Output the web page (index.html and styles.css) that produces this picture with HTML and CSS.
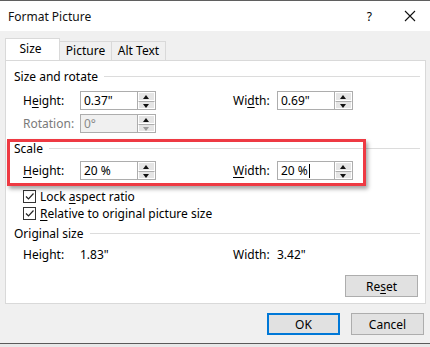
FILE: index.html
```html
<!DOCTYPE html>
<html lang="en">
<head>
    <meta charset="UTF-8">
    <title>Format Picture</title>
    <link rel="stylesheet" href="styles.css">
</head>
<body>
    <div class="dialog">
        <div class="titlebar">
            <span class="title">Format Picture</span>
            <span class="help">?</span>
            <svg class="close" width="12" height="12" viewBox="0 0 12 12">
                <path d="M1 1 L11 11 M11 1 L1 11" stroke="#111" stroke-width="1.1"/>
            </svg>
        </div>

        <div class="content">
            <div class="tabs">
                <div class="tab active">Size</div>
                <div class="tab">Picture</div>
                <div class="tab">Alt Text</div>
            </div>

            <div class="panel">
                <div class="section-title"><span>Size and rotate</span></div>
                <div class="field-grid">
                    <label>H<u>e</u>ight:</label>
                    <div class="spin"><div class="spin-value">0.37"</div><div class="spin-btns"><span class="up"></span><span class="down"></span></div></div>
                    <label class="wlabel">Wi<u>d</u>th:</label>
                    <div class="spin"><div class="spin-value">0.69"</div><div class="spin-btns"><span class="up"></span><span class="down"></span></div></div>

                    <label class="disabled">Rotation:</label>
                    <div class="spin disabled"><div class="spin-value">0°</div><div class="spin-btns"><span class="up"></span><span class="down"></span></div></div>
                </div>

                <div class="section-title scale-title"><span>Scale</span></div>
                <div class="field-grid scale-grid">
                    <label><u>H</u>eight:</label>
                    <div class="spin"><div class="spin-value">20 %</div><div class="spin-btns"><span class="up"></span><span class="down"></span></div></div>
                    <label class="wlabel"><u>W</u>idth:</label>
                    <div class="spin"><div class="spin-value">20 %<span class="caret"></span></div><div class="spin-btns"><span class="up"></span><span class="down"></span></div></div>
                </div>

                <div class="checks">
                    <div class="check">
                        <svg width="13" height="13" viewBox="0 0 13 13"><rect x="0.5" y="0.5" width="12" height="12" fill="#fff" stroke="#333"/><path d="M3 6.5 L5.5 9 L10.5 3.5" fill="none" stroke="#222" stroke-width="1.2"/></svg>
                        <span>Lock <u>a</u>spect ratio</span>
                    </div>
                    <div class="check">
                        <svg width="13" height="13" viewBox="0 0 13 13"><rect x="0.5" y="0.5" width="12" height="12" fill="#fff" stroke="#333"/><path d="M3 6.5 L5.5 9 L10.5 3.5" fill="none" stroke="#222" stroke-width="1.2"/></svg>
                        <span><u>R</u>elative to original picture size</span>
                    </div>
                </div>

                <div class="section-title orig-title"><span>Original size</span></div>
                <div class="orig-grid">
                    <span>Height:</span>
                    <span>1.83"</span>
                    <span>Width:</span>
                    <span>3.42"</span>
                </div>

                <div class="reset-row">
                    <button class="btn">Re<u>s</u>et</button>
                </div>

                <!-- annotation box around the Scale group -->
                <div class="highlight"></div>
            </div>

            <div class="footer">
                <button class="btn ok">OK</button>
                <button class="btn">Cancel</button>
            </div>
        </div>
        <div class="bottom-edge"></div>
    </div>
</body>
</html>
```

FILE: styles.css
```css
/* Base */
html, body {
    margin: 0;
    padding: 0;
    background: #f0f0f0;
    overflow: hidden;
}

body {
    font-family: "Noto Sans", "Open Sans", sans-serif;
    font-size: 12px;
    color: #000;
}

u {
    text-decoration-thickness: 1px;
    text-underline-offset: 2px;
}

/* Window */
.dialog {
    width: 430px;
    height: 347px;
    border-top: 1px solid #5f5f5f;
    box-sizing: border-box;
    display: flex;
    flex-direction: column;
}

.titlebar {
    height: 30px;
    background: #fff;
    display: flex;
    align-items: center;
    padding-left: 8px;
    padding-right: 14px;
}

.title {
    flex: 1;
    color: #111;
}

.help {
    margin-right: 32px;
}

/* Tabs + panel */
.content {
    flex: 1;
    padding: 7px 4px 0 5px;
}

.tabs {
    display: flex;
    align-items: flex-end;
    height: 22px;
}

.tab {
    height: 19px;
    line-height: 18px;
    box-sizing: border-box;
    border: 1px solid #d9d9d9;
    border-bottom: none;
    border-left: none;
    background: #f0f0f0;
    width: 52px;
    text-align: center;
    white-space: nowrap;
}

.tab.active {
    height: 23px;
    line-height: 20px;
    background: #fff;
    border-left: 1px solid #d9d9d9;
    width: 55px;
    position: relative;
    top: 1px;
    padding-right: 4px;
}

.tab:last-child {
    width: 54px;
}

.panel {
    position: relative;
    height: 244px;
    box-sizing: border-box;
    background: #fff;
    border: 1px solid #d9d9d9;
    padding: 0 5px 0 8px;
}

/* Group headers with rule */
.section-title {
    display: flex;
    align-items: center;
    height: 16px;
    margin-top: 7px;
}

.section-title::after {
    content: "";
    flex: 1;
    height: 1px;
    background: #dcdcdc;
    margin-left: 6px;
}

.scale-title {
    margin-top: 7px;
}

.orig-title {
    margin-top: 5px;
}

/* Fields */
.field-grid {
    display: grid;
    grid-template-columns: 57px 76px 121px 76px;
    row-gap: 4px;
    align-items: center;
    padding-left: 9px;
    margin-top: 7px;
}

.scale-grid {
    margin-top: 5px;
}

.field-grid label {
    line-height: 18px;
}

.field-grid .wlabel {
    padding-left: 77px;
}

label.disabled {
    color: #7a7a7a;
}

.spin {
    display: flex;
    height: 19px;
    box-sizing: border-box;
    border: 1px solid #adadad;
    background: #fff;
}

.spin-value {
    flex: 1;
    padding-left: 3px;
    line-height: 17px;
    display: flex;
    align-items: center;
    white-space: nowrap;
}

.caret {
    display: inline-block;
    width: 1px;
    height: 14px;
    background: #000;
    margin-left: 1px;
}

.spin.disabled .spin-value {
    background: #f0f0f0;
    color: #8a8a8a;
}

.spin-btns {
    width: 17px;
    display: flex;
    flex-direction: column;
    border-left: 1px solid #adadad;
}

.spin-btns span {
    flex: 1;
    background: #e5e5e5;
    border: 1px solid #fff;
    position: relative;
}

.spin-btns span + span {
    border-top: 1px solid #adadad;
}

.spin-btns span::after {
    content: "";
    position: absolute;
    left: 4px;
    border-left: 3.5px solid transparent;
    border-right: 3.5px solid transparent;
}

.spin-btns .up::after {
    top: 2px;
    border-bottom: 4px solid #111;
}

.spin-btns .down::after {
    top: 2px;
    border-top: 4px solid #111;
}

.spin.disabled .spin-btns .down::after {
    border-top-color: #9a9a9a;
}

/* Checkboxes */
.checks {
    padding-left: 9px;
    margin-top: 9px;
    display: flex;
    flex-direction: column;
    gap: 3px;
}

.check {
    display: flex;
    align-items: center;
    gap: 4px;
    height: 14px;
}

/* Original size */
.orig-grid {
    display: grid;
    grid-template-columns: 57px 153px 44px auto;
    padding-left: 9px;
    margin-top: 6px;
    line-height: 16px;
}

/* Buttons */
.reset-row {
    display: flex;
    justify-content: flex-end;
    margin-top: 12px;
    padding-right: 2px;
}

.btn {
    width: 73px;
    height: 22px;
    font-family: inherit;
    font-size: 12px;
    color: #000;
    background: #e1e1e1;
    border: 1px solid #adadad;
    padding: 0;
}

.btn.ok {
    border: 2px solid #0078d7;
}

.footer {
    display: flex;
    justify-content: flex-end;
    gap: 11px;
    margin-top: 9px;
    margin-right: 2px;
}

/* Red annotation */
.highlight {
    position: absolute;
    left: 1px;
    top: 78px;
    width: 359px;
    height: 47px;
    box-sizing: border-box;
    border: 3px solid #ee3a43;
    box-shadow: 2px 3px 4px rgba(0, 0, 0, 0.35);
}

.bottom-edge {
    height: 3px;
    border-top: 1px solid #5a5a5a;
    background: #e8e8e8;
}
```
